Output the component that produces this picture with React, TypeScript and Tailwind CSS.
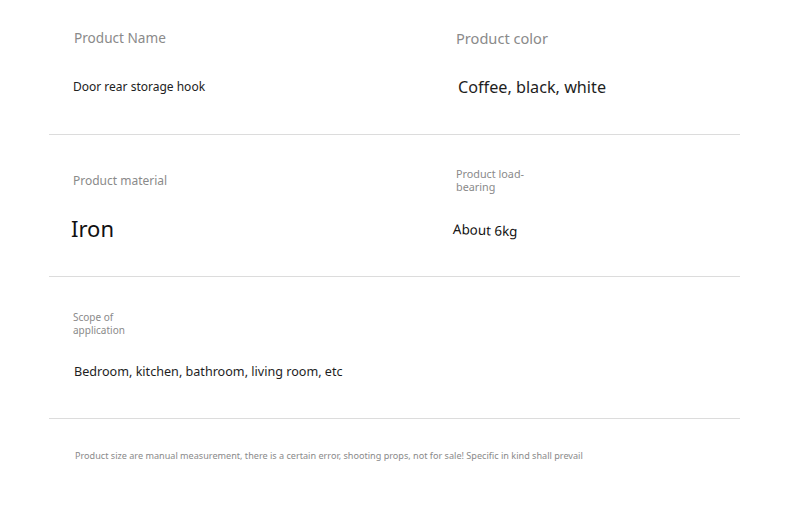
import React from "react";

export default function App() {
  return (
    <div className="w-[790px] h-[525px] bg-white overflow-hidden" style={{ fontFamily: '"Noto Sans", "Open Sans", sans-serif' }}>
      <div className="ml-[49px] w-[691px]">
        {/* Row 1 */}
        <div className="flex h-[135px] border-b border-[#dcdcdc]">
          <div className="w-[407px] pl-[25px] pt-[28px]">
            <div className="text-[13.6px] leading-[20px] text-[#8a8a8a]">Product Name</div>
            <div className="mt-[31px] -ml-[1px] text-[12px] leading-[16px] text-[#222]">Door rear storage hook</div>
          </div>
          <div className="flex-1 pt-[28px]">
            <div className="text-[14.6px] leading-[20px] text-[#8a8a8a]">Product color</div>
            <div className="mt-[29px] ml-[2px] text-[16.2px] leading-[20px] text-[#1e1e1e]">Coffee, black, white</div>
          </div>
        </div>
        {/* Row 2 */}
        <div className="flex h-[142px] border-b border-[#dcdcdc]">
          <div className="w-[407px] pl-[24px] pt-[38px]">
            <div className="text-[12px] leading-[16px] text-[#8a8a8a]">Product material</div>
            <div className="mt-[25px] -ml-[2px] text-[22px] leading-[28px] text-[#111]">Iron</div>
          </div>
          <div className="flex-1 pt-[32px]">
            <div className="text-[10.8px] leading-[13px] text-[#8a8a8a] w-[80px]">Product load-<br />bearing</div>
            <div className="mt-[27px] -ml-[3px] text-[13.4px] leading-[18px] text-[#111] rotate-[2deg] origin-left">About 6kg</div>
          </div>
        </div>
        {/* Row 3 */}
        <div className="flex h-[142px] border-b border-[#dcdcdc]">
          <div className="pl-[24px] pt-[34px]">
            <div className="text-[10px] leading-[12.5px] text-[#8a8a8a]">Scope of<br />application</div>
            <div className="mt-[27px] ml-[1px] text-[12.6px] leading-[18px] text-[#1e1e1e]">Bedroom, kitchen, bathroom, living room, etc</div>
          </div>
        </div>
        {/* Footer */}
        <div className="pl-[26px] pt-[31px]">
          <div className="text-[9.1px] leading-[12px] text-[#8a8a8a]">Product size are manual measurement, there is a certain error, shooting props, not for sale! Specific in kind shall prevail</div>
        </div>
      </div>
    </div>
  );
}
